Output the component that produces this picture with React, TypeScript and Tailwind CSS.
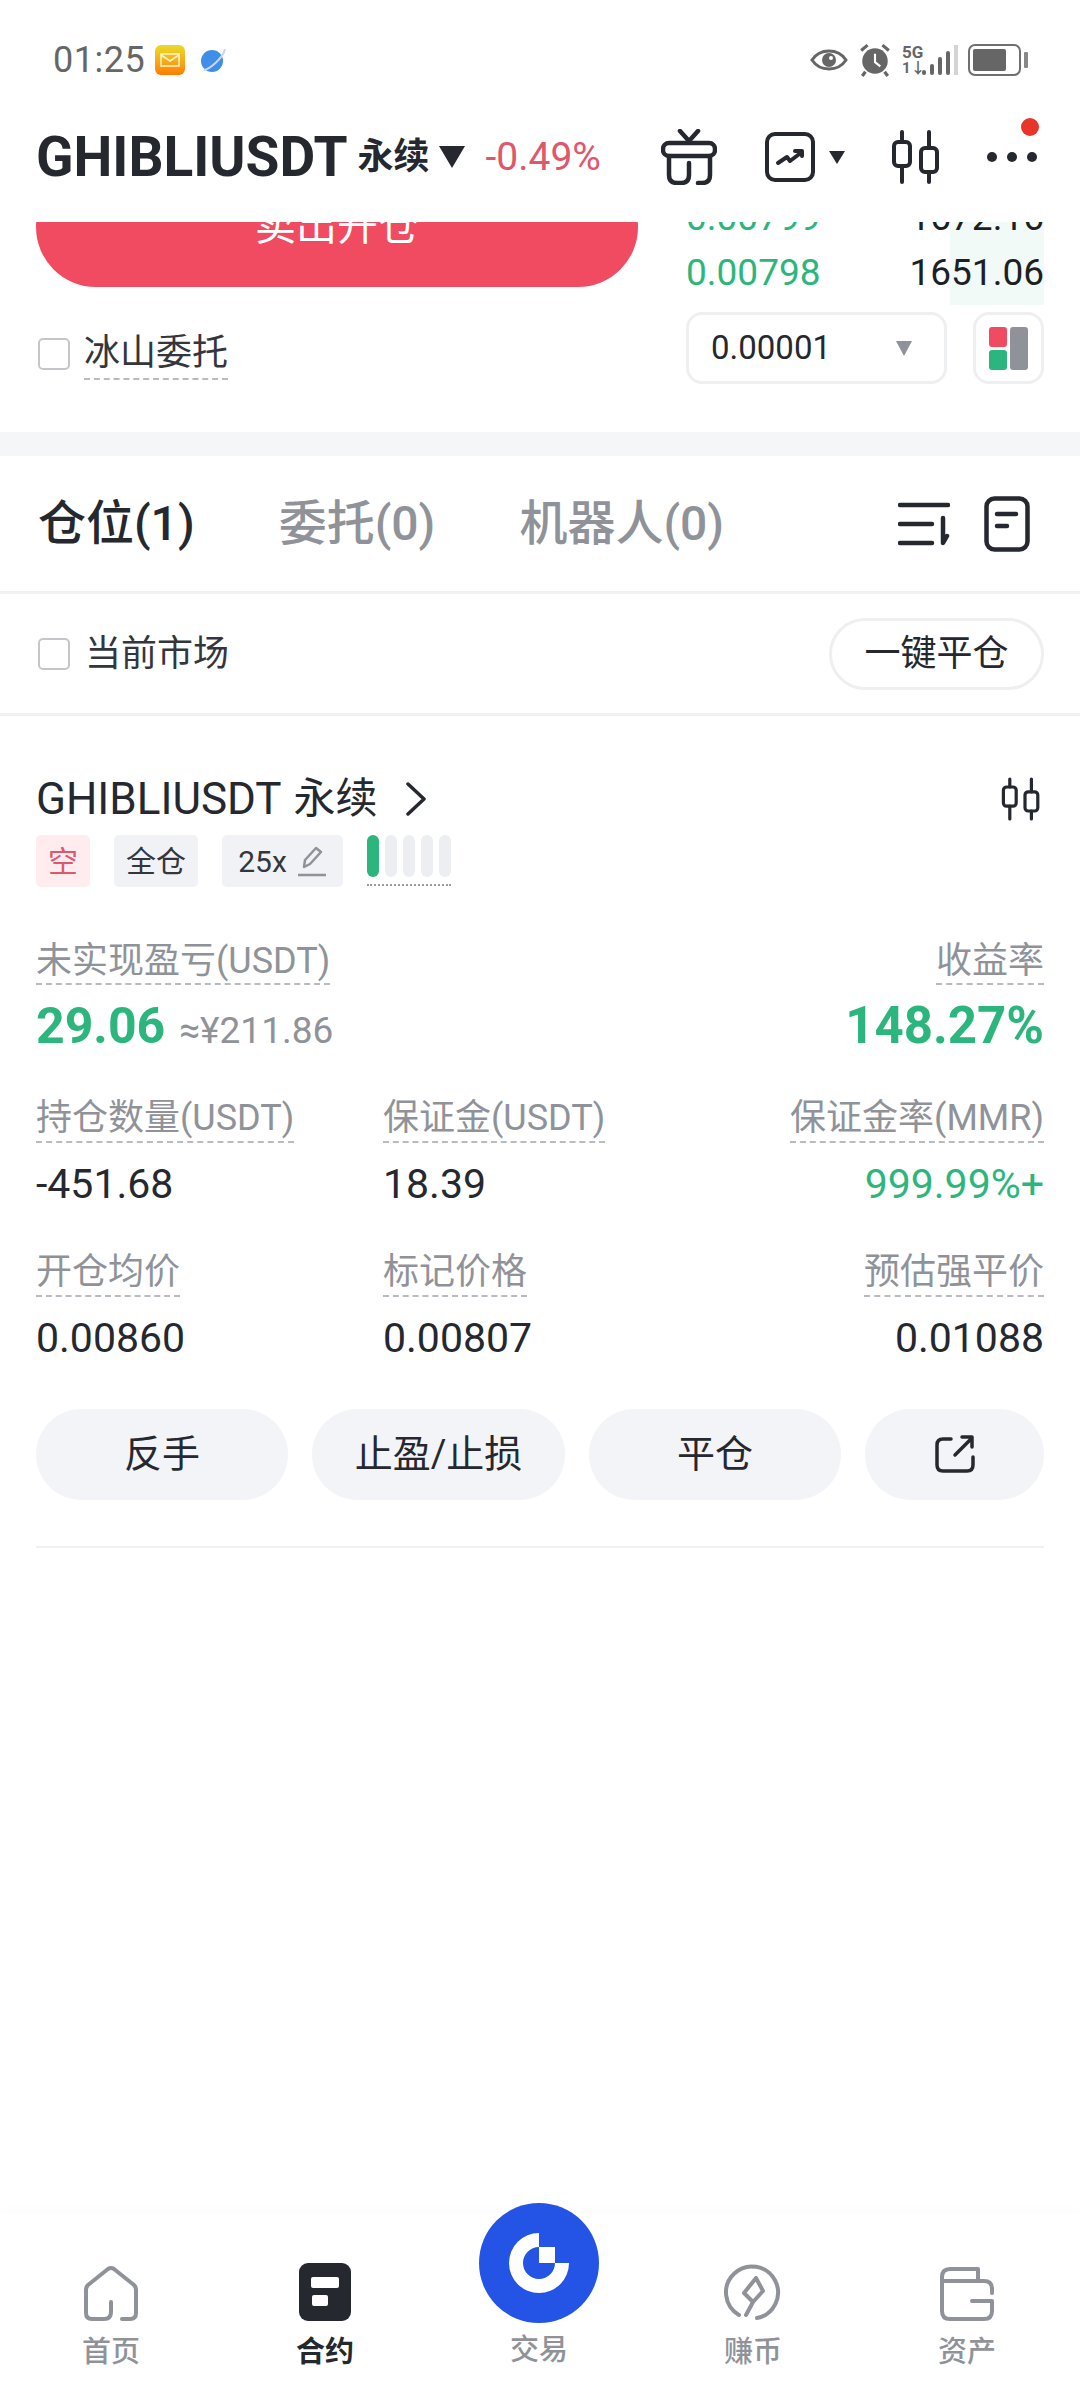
import type { ReactNode } from "react";

const dashed = "border-b-[2px] border-dashed border-[#b8bbc0]";

const Candles = ({ className }: { className: string }) => (
  <svg viewBox="0 0 50 54" fill="none" stroke="#25282e" strokeWidth="4" strokeLinecap="round" className={className}>
    <path d="M11 2v10M11 36v16M38 2v16M38 42v10" />
    <rect x="3" y="12" width="16" height="24" rx="4" />
    <rect x="30" y="18" width="16" height="24" rx="4" />
  </svg>
);

const Checkbox = () => <div className="w-[32px] h-[32px] rounded-[5px] border-[2px] border-[#c4c6ca] bg-white shrink-0" />;

const StatusBar = () => (
  <div className="h-[118px] flex items-start justify-between pt-[42px] pl-[53px] pr-[52px]">
    <div className="flex items-center gap-[10px] h-[36px]">
      <span className="text-[36px] leading-[36px] tracking-[0.5px] text-[#666666]">01:25</span>
      <div className="w-[30px] h-[30px] rounded-[6px] bg-gradient-to-b from-[#e6dc2a] to-[#ff7a00] flex items-center justify-center">
        <svg viewBox="0 0 20 14" fill="none" stroke="#fff3c0" strokeWidth="1.6" className="w-[20px] h-[14px]">
          <rect x="1" y="1" width="18" height="12" />
          <path d="M1 2l9 6 9-6" />
        </svg>
      </div>
      <svg viewBox="0 0 26 26" className="w-[26px] h-[26px] ml-[5px]">
        <circle cx="12" cy="14" r="11" fill="#3f8fe8" />
        <path d="M4 23C10 22 23 11 25 2" fill="none" stroke="#c9d6fa" strokeWidth="2" />
      </svg>
    </div>
    <div className="flex items-center h-[36px]">
      <svg viewBox="0 0 38 26" className="w-[38px] h-[26px]">
        <path d="M2 13C10 1 28 1 36 13C28 25 10 25 2 13Z" fill="none" stroke="#666" strokeWidth="3" />
        <circle cx="19" cy="13" r="7" fill="#666" />
        <circle cx="21" cy="11" r="2" fill="#fff" />
      </svg>
      <svg viewBox="0 0 30 32" className="w-[32px] h-[34px] ml-[11px]">
        <circle cx="15" cy="17" r="12" fill="#666" />
        <path d="M15 10v8l5 4" fill="none" stroke="#fff" strokeWidth="2" />
        <path d="M2 7l6-5M28 7l-6-5M6 27l-3 4M24 27l3 4" stroke="#666" strokeWidth="3" />
      </svg>
      <div className="flex flex-col ml-[11px] w-[18px] text-[#666666] font-bold">
        <span className="text-[17px] leading-[16px]">5G</span>
        <span className="text-[15px] leading-[16px] whitespace-nowrap">1↓</span>
      </div>
      <div className="flex items-end gap-[4px] h-[30px] ml-[2px]">
        <div className="w-[4px] h-[5px] bg-[#666666] rounded-full" />
        <div className="w-[4px] h-[11px] bg-[#666666] rounded-full" />
        <div className="w-[4px] h-[18px] bg-[#666666] rounded-full" />
        <div className="w-[4px] h-[24px] bg-[#666666] rounded-full" />
        <div className="w-[4px] h-[30px] bg-[#d4d4d4]" />
      </div>
      <div className="ml-[10px] w-[53px] h-[32px] rounded-[7px] border-[2px] border-[#707070] p-[3px]">
        <div className="w-[33px] h-full bg-[#666666] rounded-[2px]" />
      </div>
      <div className="w-[4px] h-[16px] bg-[#888888] ml-[3px] rounded-[1px]" />
    </div>
  </div>
);

const Header = () => (
  <div className="h-[104px] flex items-start pl-[36px] bg-white">
    <div className="flex items-center h-[78px]">
      <span className="text-[55px] leading-[78px] font-bold text-[#25282e]">GHIBLIUSDT</span>
      <span className="text-[36px] font-bold text-[#25282e] ml-[10px]">永续</span>
      <div className="w-0 h-0 border-l-[13px] border-r-[13px] border-t-[22px] border-l-transparent border-r-transparent border-t-[#25282e] ml-[9px]" />
      <span className="text-[39px] text-[#e0566b] ml-[21px]">-0.49%</span>
    </div>
    <div className="ml-auto flex items-center h-[78px] pr-[43px]">
      <svg viewBox="0 0 56 56" fill="none" stroke="#25282e" strokeWidth="4.5" strokeLinecap="round" strokeLinejoin="round" className="w-[56px] h-[56px]">
        <rect x="2" y="14" width="52" height="13" rx="6" />
        <path d="M19 2l9 10 9-10M8 27v19q0 8 8 8h4q8 0 8-8V34M49 27v19q0 8-8 8h-4" />
      </svg>
      <svg viewBox="0 0 50 50" fill="none" stroke="#25282e" strokeWidth="4" strokeLinecap="round" strokeLinejoin="round" className="w-[50px] h-[50px] ml-[48px]">
        <rect x="2" y="2" width="46" height="46" rx="8" />
        <path d="M13 31l9-6 3 4 12-9M30 19h7v5" />
      </svg>
      <div className="w-0 h-0 border-l-[8px] border-r-[8px] border-t-[13px] border-l-transparent border-r-transparent border-t-[#25282e] ml-[14px]" />
      <Candles className="w-[50px] h-[54px] ml-[46px]" />
      <div className="flex gap-[10px] ml-[46px] relative">
        <div className="w-[10px] h-[10px] rounded-full bg-[#25282e]" />
        <div className="w-[10px] h-[10px] rounded-full bg-[#25282e]" />
        <div className="w-[10px] h-[10px] rounded-full bg-[#25282e]" />
        <div className="absolute right-[-2px] top-[-34px] w-[18px] h-[18px] rounded-full bg-[#e8352b]" />
      </div>
    </div>
  </div>
);

const OrderPanel = () => (
  <div className="h-[210px] overflow-hidden flex pl-[36px] pr-[36px] bg-white">
    <div className="w-[602px] shrink-0">
      <div className="h-[120px] -mt-[55px] rounded-[60px] bg-[#f04b61] flex items-center justify-center text-white text-[41px]">
        卖出开仓
      </div>
      <div className="flex items-center mt-[41px] gap-[14px] pl-[2px]">
        <Checkbox />
        <span className={`text-[36px] leading-[50px] text-[#33363c] ${dashed}`}>冰山委托</span>
      </div>
    </div>
    <div className="ml-[48px] flex-1 min-w-0">
      <div className="relative h-[83px] flex flex-col">
        <div className="absolute right-0 top-0 bottom-0 w-[94px] bg-[#f1faf6]" />
        <div className="relative flex justify-between text-[37px] leading-[40px] -mt-[24px]">
          <span className="text-[#2cb67d]">0.00799</span>
          <span className="text-[#1d1f24]">1672.16</span>
        </div>
        <div className="relative flex justify-between text-[37px] leading-[40px] mt-[15px]">
          <span className="text-[#2cb67d]">0.00798</span>
          <span className="text-[#1d1f24]">1651.06</span>
        </div>
      </div>
      <div className="flex gap-[26px] mt-[7px]">
        <div className="w-[262px] h-[72px] rounded-[16px] border-[3px] border-[#eeeff1] flex items-center pl-[22px] pr-[32px] justify-between">
          <span className="text-[33px] text-[#25282e]">0.00001</span>
          <div className="w-0 h-0 border-l-[8px] border-r-[8px] border-t-[15px] border-l-transparent border-r-transparent border-t-[#8f9399]" />
        </div>
        <div className="w-[71px] h-[72px] rounded-[16px] border-[3px] border-[#eeeff1] flex items-center justify-center gap-[3px]">
          <div className="flex flex-col gap-[3px]">
            <div className="w-[18px] h-[20px] rounded-[3px] bg-[#f04b61]" />
            <div className="w-[18px] h-[20px] rounded-[3px] bg-[#2cb67d]" />
          </div>
          <div className="w-[18px] h-[43px] rounded-[3px] bg-[#8f9399]" />
        </div>
      </div>
    </div>
  </div>
);

const Tabs = () => (
  <div className="h-[138px] border-b-[3px] border-[#f0f1f2] flex items-center pl-[38px] pr-[49px]">
    <span className="text-[48px] font-medium text-[#25282e]">仓位(1)</span>
    <span className="text-[48px] font-medium text-[#8f9399] ml-[84px]">委托(0)</span>
    <span className="text-[48px] font-medium text-[#8f9399] ml-[84px]">机器人(0)</span>
    <div className="ml-auto flex items-center">
      <svg viewBox="0 0 52 44" fill="none" stroke="#25282e" strokeWidth="4.5" strokeLinecap="round" strokeLinejoin="round" className="w-[52px] h-[44px]">
        <path d="M2 3h48M2 22h32M2 41h32M45 16v25l4-7" />
      </svg>
      <svg viewBox="0 0 46 56" fill="none" stroke="#25282e" strokeWidth="4.5" strokeLinecap="round" className="w-[48px] h-[56px] ml-[33px]">
        <rect x="2.5" y="2.5" width="41" height="51" rx="8" />
        <path d="M13 18h19M13 30h10" />
      </svg>
    </div>
  </div>
);

const FilterRow = () => (
  <div className="h-[122px] border-b-[3px] border-[#f0f1f2] flex items-center pl-[38px] pr-[36px]">
    <Checkbox />
    <span className="text-[36px] text-[#33363c] ml-[15px]">当前市场</span>
    <div className="ml-auto w-[215px] h-[72px] rounded-full border-[3px] border-[#eeeff1] flex items-center justify-center text-[36px] text-[#25282e]">
      一键平仓
    </div>
  </div>
);

const Cell = ({ label, value, right, valueClass }: { label: string; value: string; right?: boolean; valueClass?: string }) => (
  <div className={`flex flex-col ${right ? "items-end" : "items-start"}`}>
    <span className={`text-[36px] leading-[46px] text-[#8f9399] ${dashed}`}>{label}</span>
    <span className={`text-[41px] leading-[46px] mt-[18px] ${valueClass ?? "text-[#25282e]"}`}>{value}</span>
  </div>
);

const PositionCard = () => (
  <div className="mx-[36px] pt-[56px] border-b-[2px] border-[#f0f1f2] h-[832px]">
    <div className="flex items-center h-[54px]">
      <span className="text-[44px] leading-[54px] text-[#25282e]">GHIBLIUSDT</span>
      <span className="text-[42px] leading-[54px] text-[#25282e] ml-[12px]">永续</span>
      <svg viewBox="0 0 22 34" fill="none" stroke="#25282e" strokeWidth="3.5" strokeLinecap="round" strokeLinejoin="round" className="w-[22px] h-[34px] ml-[27px]">
        <path d="M3 2l16 15L3 32" />
      </svg>
      <Candles className="w-[40px] h-[44px] ml-auto mr-[3px]" />
    </div>
    <div className="flex items-start gap-[24px] mt-[9px]">
      <div className="w-[54px] h-[52px] rounded-[5px] bg-[#feecef] text-[#e0566b] text-[30px] flex items-center justify-center">空</div>
      <div className="w-[84px] h-[52px] rounded-[5px] bg-[#f1f2f5] text-[#33363c] text-[30px] flex items-center justify-center">全仓</div>
      <div className="w-[121px] h-[52px] rounded-[5px] bg-[#f1f2f5] text-[#33363c] text-[30px] flex items-center justify-center gap-[10px]">
        25x
        <svg viewBox="0 0 30 32" fill="none" stroke="#8f9399" strokeWidth="2.5" strokeLinejoin="round" className="w-[30px] h-[32px]">
          <path d="M7 22l1-7L19 3l5 4-11 12zM1 30h28" />
        </svg>
      </div>
      <div className="flex gap-[6px] pb-[7px] border-b-[2px] border-dotted border-[#9a9da3]">
        <div className="w-[12px] h-[42px] rounded-full bg-[#2cb67d]" />
        <div className="w-[12px] h-[42px] rounded-full bg-[#eceef1]" />
        <div className="w-[12px] h-[42px] rounded-full bg-[#eceef1]" />
        <div className="w-[12px] h-[42px] rounded-full bg-[#eceef1]" />
        <div className="w-[12px] h-[42px] rounded-full bg-[#eceef1]" />
      </div>
    </div>
    <div className="flex justify-between mt-[52px]">
      <div className="flex flex-col items-start">
        <span className={`text-[36px] leading-[44px] text-[#8f9399] ${dashed}`}>未实现盈亏(USDT)</span>
        <div className="flex items-baseline mt-[11px]">
          <span className="text-[50px] leading-[60px] font-bold text-[#2cb67d]">29.06</span>
          <span className="text-[37px] text-[#8f9399] ml-[14px]">≈¥211.86</span>
        </div>
      </div>
      <div className="flex flex-col items-end">
        <span className={`text-[36px] leading-[44px] text-[#8f9399] ${dashed}`}>收益率</span>
        <span className="text-[51px] leading-[60px] font-bold text-[#2cb67d] mt-[11px]">148.27%</span>
      </div>
    </div>
    <div className="grid grid-cols-[347px_1fr_auto] mt-[36px]">
      <Cell label="持仓数量(USDT)" value="-451.68" />
      <Cell label="保证金(USDT)" value="18.39" />
      <Cell label="保证金率(MMR)" value="999.99%+" right valueClass="text-[#2cb67d]" />
    </div>
    <div className="grid grid-cols-[347px_1fr_auto] mt-[42px]">
      <Cell label="开仓均价" value="0.00860" />
      <Cell label="标记价格" value="0.00807" />
      <Cell label="预估强平价" value="0.01088" right />
    </div>
    <div className="flex gap-[24px] mt-[48px]">
      <div className="w-[252px] h-[91px] rounded-full bg-[#f3f4f7] flex items-center justify-center text-[38px] text-[#25282e]">反手</div>
      <div className="w-[253px] h-[91px] rounded-full bg-[#f3f4f7] flex items-center justify-center text-[38px] text-[#25282e]">止盈/止损</div>
      <div className="w-[252px] h-[91px] rounded-full bg-[#f3f4f7] flex items-center justify-center text-[38px] text-[#25282e]">平仓</div>
      <div className="flex-1 h-[91px] rounded-full bg-[#f3f4f7] flex items-center justify-center">
        <svg viewBox="0 0 40 38" fill="none" stroke="#25282e" strokeWidth="3.5" strokeLinecap="round" strokeLinejoin="round" className="w-[40px] h-[38px]">
          <path d="M16 4H8q-6 0-6 6v20q0 6 6 6h24q6 0 6-6v-8M20 20L37 3M27 2h10v10" />
        </svg>
      </div>
    </div>
  </div>
);

const NavItem = ({ label, active, children }: { label: string; active?: boolean; children: ReactNode }) => (
  <div className="w-[214px] flex flex-col items-center">
    <div className="h-[58px] flex items-end justify-center">{children}</div>
    <span className={`text-[29px] leading-[40px] mt-[11px] ${active ? "font-bold text-[#25282e]" : "font-medium text-[#8f9399]"}`}>{label}</span>
  </div>
);

const BottomNav = () => (
  <div className="h-[175px] bg-white shadow-[0_-4px_10px_rgba(0,0,0,0.015)] flex items-start pl-[4px] pt-[50px]">
    <NavItem label="首页">
      <svg viewBox="0 0 54 56" fill="none" stroke="#8f9399" strokeWidth="4" strokeLinejoin="round" strokeLinecap="round" className="w-[54px] h-[56px]">
        <path d="M38 54h8q6 0 6-6V25q0-3-2-5L30 4q-3-2-6 0L4 20q-2 2-2 5v23q0 6 6 6h12q7 0 7-7V37" />
      </svg>
    </NavItem>
    <NavItem label="合约" active>
      <div className="w-[52px] h-[58px] rounded-[9px] bg-[#25282e] flex flex-col items-center pt-[14px] gap-[7px]">
        <div className="w-[28px] h-[11px] rounded-[2px] bg-white" />
        <div className="w-[16px] h-[11px] rounded-[2px] bg-white -ml-[11px]" />
      </div>
    </NavItem>
    <div className="w-[214px] flex flex-col items-center -mt-[60px] relative">
      <div className="w-[120px] h-[120px] rounded-full bg-[#2354e6] flex items-center justify-center">
        <svg viewBox="0 0 60 60" className="w-[60px] h-[60px]">
          <path d="M30 0A30 30 0 1 0 60 30H46A16 16 0 1 1 30 14Z" fill="white" />
          <rect x="30" y="14" width="16" height="16" fill="white" />
        </svg>
      </div>
      <span className="text-[29px] leading-[40px] mt-[7px] font-medium text-[#8f9399]">交易</span>
    </div>
    <NavItem label="赚币">
      <svg viewBox="0 0 58 58" fill="none" stroke="#8f9399" strokeWidth="4" strokeLinejoin="round" strokeLinecap="round" className="w-[58px] h-[58px]">
        <path d="M15 52A26 26 0 1 1 33 55M32 15L20 30l9 9-7 13M32 15l7 13-10 11" />
      </svg>
    </NavItem>
    <NavItem label="资产">
      <svg viewBox="0 0 54 54" fill="none" stroke="#8f9399" strokeWidth="4" strokeLinejoin="round" strokeLinecap="round" className="w-[54px] h-[54px]">
        <path d="M38 14V2H10q-8 0-8 8v34q0 8 8 8h34q8 0 8-8V34H32M2 14h42q8 0 8 8v4" />
      </svg>
    </NavItem>
  </div>
);

export default function App() {
  return (
    <div className="w-[1080px] h-[2388px] bg-white flex flex-col overflow-hidden font-['Roboto','Noto_Sans_CJK_SC',sans-serif]">
      <StatusBar />
      <Header />
      <OrderPanel />
      <div className="h-[24px] bg-[#f5f6f7]" />
      <Tabs />
      <FilterRow />
      <PositionCard />
      <div className="flex-1" />
      <BottomNav />
    </div>
  );
}
